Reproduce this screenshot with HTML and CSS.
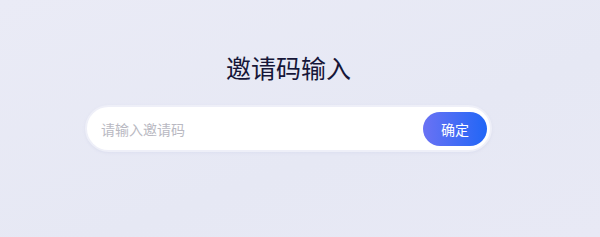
FILE: index.html
```html
<!DOCTYPE html>
<html lang="zh">
<head>
<meta charset="utf-8">
<link rel="stylesheet" href="styles.css">
</head>
<body>
<div class="page">
  <div class="panel">
    <h1 class="title">邀请码输入</h1>
    <div class="field">
      <span class="placeholder">请输入邀请码</span>
      <button class="confirm">确定</button>
    </div>
  </div>
</div>
</body>
</html>
```
FILE: styles.css
```css
html, body {
  margin: 0;
  padding: 0;
}
body {
  width: 600px;
  height: 237px;
  background: linear-gradient(160deg, #eaebf6 0%, #e6e8f4 60%, #e8e9f5 100%);
  font-family: "Noto Sans CJK SC", "Noto Sans", sans-serif;
  overflow: hidden;
}
.page {
  padding: 49px 0 0 85px;
}
.panel {
  width: 407px;
  display: flex;
  flex-direction: column;
  align-items: center;
}
.title {
  margin: 0;
  font-size: 25px;
  font-weight: 400;
  line-height: 37px;
  color: #161638;
}
.field {
  margin-top: 19px;
  width: 407px;
  height: 47px;
  box-sizing: border-box;
  background: #ffffff;
  border: 2px solid #eeeff8;
  border-radius: 24px;
  display: flex;
  align-items: center;
  justify-content: space-between;
  padding: 0 3px 0 14px;
  box-shadow: 0 1px 3px rgba(160, 165, 210, 0.15);
}
.placeholder {
  font-size: 14px;
  color: #b9b9c2;
}
.confirm {
  width: 64px;
  height: 34px;
  border: none;
  border-radius: 17px;
  background: linear-gradient(90deg, #6a72f4 0%, #2166f6 100%);
  color: #ffffff;
  font-family: "Noto Sans CJK SC", "Noto Sans", sans-serif;
  font-size: 14px;
  padding: 0;
}
```
